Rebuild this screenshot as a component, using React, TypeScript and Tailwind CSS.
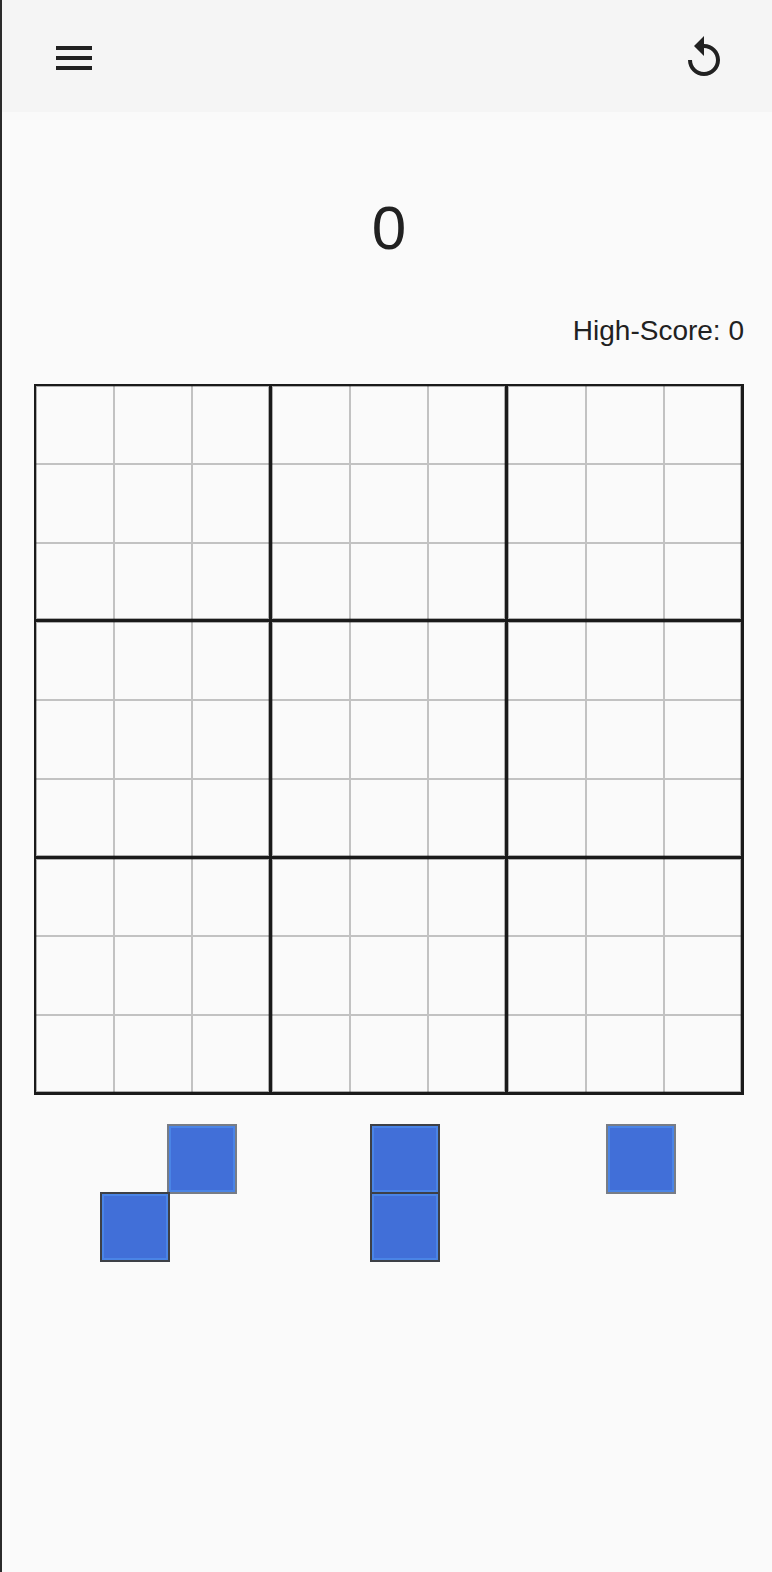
const boxIndexes = [0, 1, 2, 3, 4, 5, 6, 7, 8];
const cellIndexes = Array.from({ length: 81 }, (_, i) => i);

function Block({ soft = false }: { soft?: boolean }) {
  return (
    <div
      className={`w-[70px] h-[70px] bg-[#416fd8] border-2 shadow-[inset_0_0_0_2px_#4a84e6] ${
        soft ? "border-[#777c86]" : "border-[#3d4046]"
      }`}
    />
  );
}

function Board() {
  return (
    <div className="relative ml-[32px] mt-[37px] w-[710px] h-[711px] border border-[#1a1a1a]">
      <div className="w-full h-full grid grid-cols-9 grid-rows-9">
        {cellIndexes.map((i) => (
          <div key={i} className="border border-[#c2c2c2]" />
        ))}
      </div>
      {/* thick lines of the 3x3 boxes sit over the light cell lines */}
      <div className="absolute inset-0 grid grid-cols-3 grid-rows-3">
        {boxIndexes.map((i) => (
          <div
            key={i}
            className="border-t border-l border-r-2 border-b-2 border-[#1a1a1a] shadow-[inset_0_0_0_1px_rgba(0,0,0,0.3)]"
          />
        ))}
      </div>
    </div>
  );
}

export default function App() {
  return (
    <div className="min-h-[1572px] border-l-2 border-[#2b2b2b] bg-[#fafafa] text-[#212121] font-['Liberation_Sans',Arial,sans-serif]">
      <header className="h-[112px] pt-[4px] bg-[#f5f5f5] flex items-center justify-between pl-[48px] pr-[44px]">
        <svg className="w-12 h-12" viewBox="0 0 24 24" fill="#212121">
          <path d="M3 18h18v-2H3v2zm0-5h18v-2H3v2zm0-7v2h18V6H3z" />
        </svg>
        <svg className="w-12 h-12" viewBox="0 0 24 24" fill="#212121">
          <path d="M12 5V1L7 6l5 5V7c3.31 0 6 2.69 6 6s-2.69 6-6 6-6-2.69-6-6H4c0 4.42 3.58 8 8 8s8-3.58 8-8-3.58-8-8-8z" />
        </svg>
      </header>

      <div className="pt-[76px] pl-[4px] text-center text-[62px] leading-[80px]">0</div>

      <div className="mt-[47px] pr-[28px] text-right text-[28px] leading-[32px]">High-Score: 0</div>

      <Board />

      <div className="ml-[32px] mt-[29px] w-[710px] flex">
        <div className="ml-[66px] flex flex-col">
          <div className="flex">
            <div className="w-[67px] h-[70px]" />
            <Block soft />
          </div>
          <div className="flex -mt-[2px]">
            <Block />
          </div>
        </div>
        <div className="ml-[133px] flex flex-col">
          <Block />
          <div className="-mt-[2px]">
            <Block />
          </div>
        </div>
        <div className="ml-[166px]">
          <Block soft />
        </div>
      </div>
    </div>
  );
}
